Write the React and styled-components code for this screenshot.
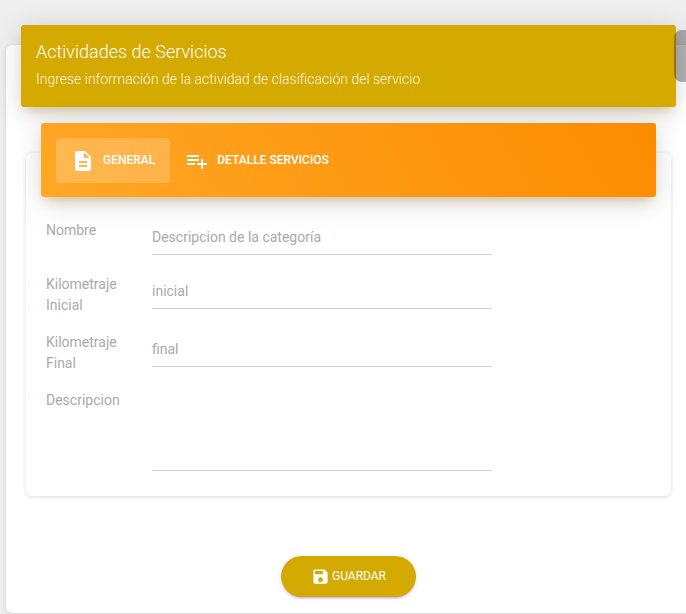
import React from "react";
import styled, { createGlobalStyle } from "styled-components";

const GlobalStyle = createGlobalStyle`
  * { box-sizing: border-box; }
  html, body { margin: 0; padding: 0; overflow: hidden; background: #eee; }
  body { font-family: Roboto, "Liberation Sans", sans-serif; font-size: 14px; font-weight: 400; line-height: 21px; }
`;

const Page = styled.main`
  width: 100%;
  height: 614px;
  padding: 45px 0 0 6px;
  overflow: hidden;
`;

const Card = styled.section`
  display: flex;
  flex-direction: column;
  width: ${(p) => p.$width}px;
  height: ${(p) => p.$height}px;
  border-radius: 6px;
  background: #fff;
  box-shadow: 0 1px 4px 0 rgba(0, 0, 0, 0.14);
`;

const raised = `
  border-radius: 3px;
  box-shadow: 0 5px 28px 0 rgba(0, 0, 0, 0.15), 0 8px 10px -5px rgba(200, 130, 30, 0.34);
`;

const CardHeader = styled.header`
  ${raised}
  height: 82px;
  flex: none;
  margin: -20px 15px 0;
  padding: 14px 15px;
  background: #d4aa00;
  color: #fff;
`;

const Title = styled.h4`
  margin: 0;
  font-size: 18px;
  font-weight: 300;
  line-height: 25px;
`;

const Subtitle = styled.p`
  margin: 5px 0 0;
  font-size: 14px;
  font-weight: 300;
  line-height: 21px;
  color: rgba(255, 255, 255, 0.9);
`;

const CardBody = styled.div`
  display: flex;
  flex-direction: column;
  padding: 46px 20px 0;
`;

const TabBar = styled.nav`
  ${raised}
  display: flex;
  height: 74px;
  flex: none;
  margin: -30px 15px 0;
  padding: 15px;
  background: linear-gradient(60deg, #ffa726, #fb8c00);
`;

const Tab = styled.button`
  display: flex;
  align-items: center;
  gap: 8px;
  height: 45px;
  padding: 0 15px 1px;
  border: 0;
  border-radius: 3px;
  background: ${(p) => (p.$active ? "rgba(255, 255, 255, 0.2)" : "transparent")};
  color: #fff;
  font: 500 12px/24px Roboto, sans-serif;
  text-transform: uppercase;
  white-space: nowrap;

  svg { display: block; margin-top: 2px; }
`;

const Form = styled.form`
  display: flex;
  flex-direction: column;
  padding: 22px 20px 0;
`;

const Row = styled.div`
  display: grid;
  grid-template-columns: 106px 340px;
  align-items: start;
  height: ${(p) => p.$height}px;
`;

const Label = styled.label`
  width: 80px;
  padding-top: 1px;
  color: #aaa;
`;

const fieldStyle = `
  width: 100%;
  margin: 0;
  padding: 0 0 7px;
  border: 0;
  border-bottom: 1px solid #d2d2d2;
  border-radius: 0;
  outline: 0;
  background: transparent;
  font: 400 14px/20px Roboto, sans-serif;
  color: #555;
  resize: none;
  &::placeholder { color: #aaa; opacity: 1; }
`;

const Input = styled.input`
  ${fieldStyle}
  height: 36px;
  padding-top: 8px;
`;

const TextArea = styled.textarea`
  ${fieldStyle}
  display: block;
  height: 82px;
`;

const SaveButton = styled.button`
  display: flex;
  align-items: center;
  align-self: center;
  justify-content: center;
  gap: 2px;
  width: 135px;
  height: 41px;
  margin-top: 60px;
  padding: 0;
  border: 0;
  border-radius: 30px;
  background: #d4aa00;
  box-shadow: 0 2px 2px 0 rgba(156, 39, 176, 0.14),
    0 3px 1px -2px rgba(156, 39, 176, 0.2), 0 1px 5px 0 rgba(156, 39, 176, 0.12);
  color: #fff;
  font: 400 12px/17px Roboto, sans-serif;
  text-transform: uppercase;
`;

const SettingsHandle = styled.aside`
  position: fixed;
  top: 30px;
  right: 0;
  width: 12px;
  height: 52px;
  border-radius: 8px 0 0 8px;
  background: rgba(0, 0, 0, 0.3);
`;

const paths = {
  document:
    "M14 2H6c-1.1 0-1.99.9-1.99 2L4 20c0 1.1.89 2 1.99 2H18c1.1 0 2-.9 2-2V8l-6-6zm2 16H8v-2h8v2zm0-4H8v-2h8v2zm-3-5V3.5L18.5 9H13z",
  playlistAdd: "M14 10H2v2h12v-2zm0-4H2v2h12V6zm4 8v-4h-2v4h-4v2h4v4h2v-4h4v-2h-4zM2 16h8v-2H2v2z",
  save: "M17 3H5c-1.11 0-2 .9-2 2v14c0 1.1.89 2 2 2h14c1.1 0 2-.9 2-2V7l-4-4zm-5 16c-1.66 0-3-1.34-3-3s1.34-3 3-3 3 1.34 3 3-1.34 3-3 3zm3-10H5V5h10v4z",
};

const Icon = ({ name, size = 24 }) => (
  <svg width={size} height={size} viewBox="0 0 24 24" fill="currentColor" aria-hidden="true">
    <path d={paths[name]} />
  </svg>
);

const fields = [
  { id: "nombre", label: "Nombre", placeholder: "Descripcion de la categoría", height: 54 },
  { id: "inicial", label: "Kilometraje Inicial", placeholder: "inicial", height: 58 },
  { id: "final", label: "Kilometraje Final", placeholder: "final", height: 58 },
  { id: "descripcion", label: "Descripcion", multiline: true, height: 82 },
];

export default function App() {
  return (
    <>
      <GlobalStyle />
      <Page>
        <Card $width={685} $height={568}>
          <CardHeader>
            <Title>Actividades de Servicios</Title>
            <Subtitle>Ingrese información de la actividad de clasificación del servicio</Subtitle>
          </CardHeader>
          <CardBody>
            <Card $width={645} $height={343}>
              <TabBar>
                <Tab $active>
                  <Icon name="document" />
                  <span>General</span>
                </Tab>
                <Tab>
                  <Icon name="playlistAdd" />
                  <span>Detalle Servicios</span>
                </Tab>
              </TabBar>
              <Form>
                {fields.map((f) => (
                  <Row key={f.id} $height={f.height}>
                    <Label htmlFor={f.id}>{f.label}</Label>
                    {f.multiline ? <TextArea id={f.id} /> : <Input id={f.id} placeholder={f.placeholder} />}
                  </Row>
                ))}
              </Form>
            </Card>
            <SaveButton>
              <Icon name="save" size={19} />
              <span>Guardar</span>
            </SaveButton>
          </CardBody>
        </Card>
      </Page>
      <SettingsHandle />
    </>
  );
}
